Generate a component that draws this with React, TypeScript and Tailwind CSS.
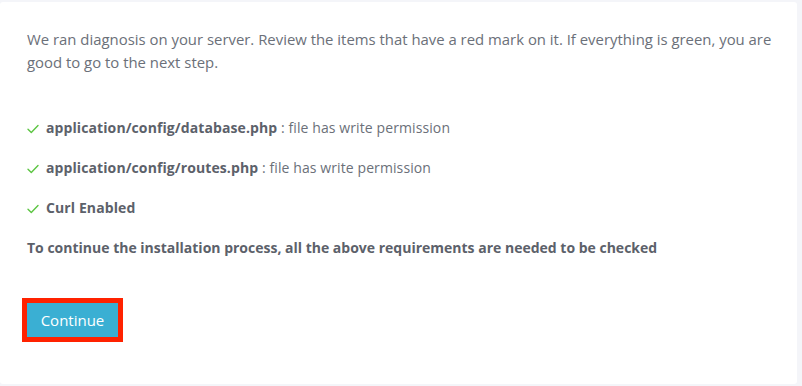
import React from "react";

function Check() {
  return (
    <svg width="12" height="10" viewBox="0 0 12 10" className="shrink-0 mr-[7px] mt-[3px]">
      <path d="M1 5.2 L4.3 8.5 L11 1.5" fill="none" stroke="#5cc542" strokeWidth="1.4" strokeLinecap="round" strokeLinejoin="round" />
    </svg>
  );
}

export default function App() {
  const items = [
    { b: "application/config/database.php", t: " : file has write permission" },
    { b: "application/config/routes.php", t: " : file has write permission" },
    { b: "Curl Enabled", t: "" },
  ];
  return (
    <div className="w-[802px] h-[386px] bg-[#f4f5f9] pt-[2px] overflow-hidden" style={{ fontFamily: "'Open Sans', sans-serif" }}>
      <div className="w-[797px] h-[382px] bg-white rounded-[3px] pl-[27px] pt-[26px] text-[#6b7079] text-[14px]">
        <p className="leading-[23px] w-[760px] text-[14.9px]">
          We ran diagnosis on your server. Review the items that have a red mark on it. If everything is green, you are good to go to the next step.
        </p>
        <div className="mt-[42px] flex flex-col gap-[17px]">
          {items.map((it, i) => (
            <div key={i} className="flex items-center h-[23px]">
              <Check />
              <span className="tracking-[0.1px]">
                <b className="font-bold text-[#5c616a]">{it.b}</b>
                {it.t}
              </span>
            </div>
          ))}
          <div className="h-[23px] flex items-center font-bold text-[#5c616a]">
            To continue the installation process, all the above requirements are needed to be checked
          </div>
        </div>
        <div className="mt-[39px] ml-[-5px] inline-block border-[5px] border-[#ff2200]">
          <button className="w-[91px] h-[34px] bg-[#3aafd3] text-white text-[15px] flex items-center justify-center">
            Continue
          </button>
        </div>
      </div>
    </div>
  );
}
